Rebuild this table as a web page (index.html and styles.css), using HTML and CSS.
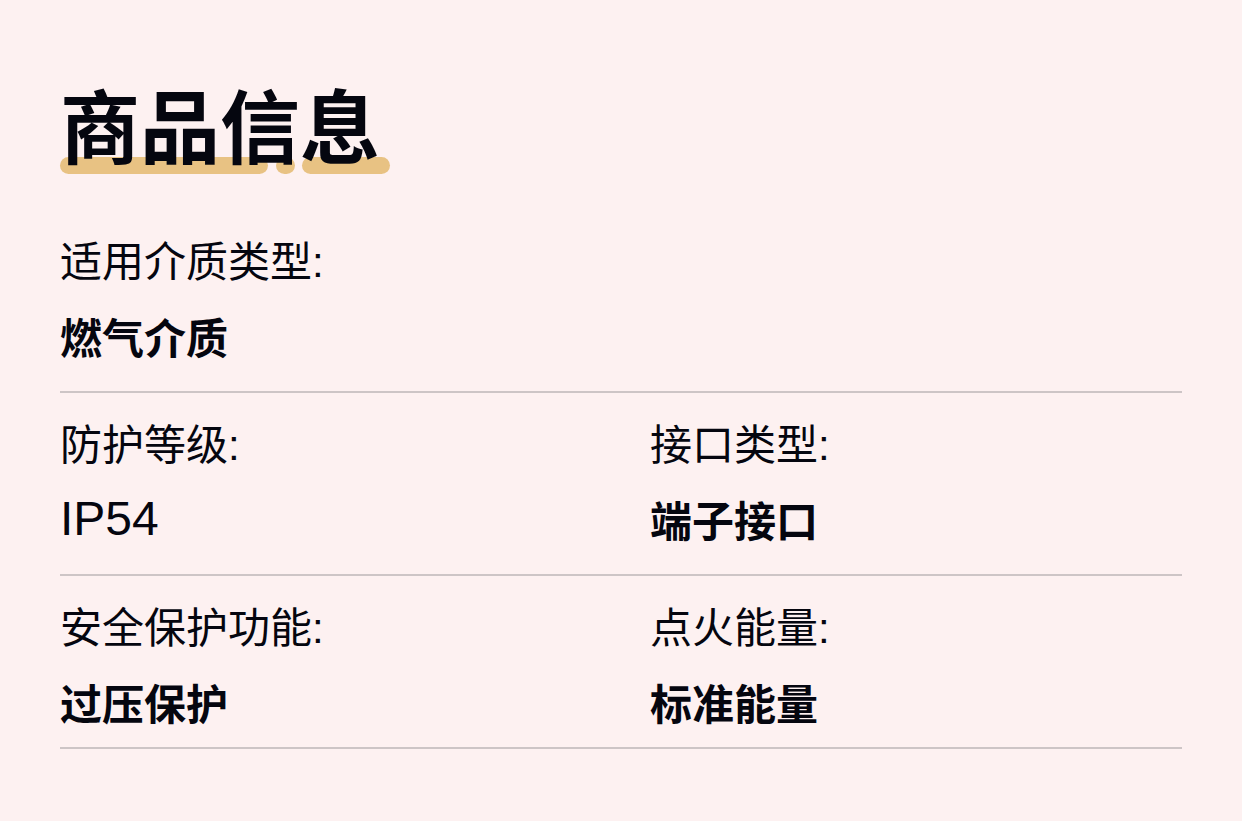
FILE: index.html
```html
<!DOCTYPE html>
<html lang="zh">
<head>
<meta charset="utf-8">
<title>商品信息</title>
<link rel="stylesheet" href="styles.css">
</head>
<body>
<main class="page">
  <h1 class="title">
    <span class="title-text">商品信息<span class="title-underline" aria-hidden="true"><span class="seg seg-a"></span><span class="seg seg-b"></span><span class="seg seg-c"></span></span></span>
  </h1>
  <section class="specs">
    <div class="row row-single">
      <div class="item">
        <div class="label">适用介质类型:</div>
        <div class="value">燃气介质</div>
      </div>
    </div>
    <div class="row">
      <div class="item">
        <div class="label">防护等级:</div>
        <div class="value value-latin">IP54</div>
      </div>
      <div class="item">
        <div class="label">接口类型:</div>
        <div class="value">端子接口</div>
      </div>
    </div>
    <div class="row">
      <div class="item">
        <div class="label">安全保护功能:</div>
        <div class="value">过压保护</div>
      </div>
      <div class="item">
        <div class="label">点火能量:</div>
        <div class="value">标准能量</div>
      </div>
    </div>
  </section>
</main>
</body>
</html>
```
FILE: styles.css
```css
* { box-sizing: border-box; }
html, body {
  margin: 0;
  padding: 0;
  background: #fdf1f1;
}
body {
  font-family: "Liberation Sans", "Noto Sans CJK SC", sans-serif;
  color: #05060f;
}
.page {
  padding: 74px 60px 0;
}
.title {
  margin: 0;
  font-size: 80px;
  font-weight: 700;
  line-height: 96px;
  font-family: "Noto Sans CJK SC", sans-serif;
}
.title-text {
  position: relative;
  display: inline-block;
  isolation: isolate;
}
.title-underline {
  position: absolute;
  left: 0;
  top: 83px;
  height: 17px;
  display: flex;
  z-index: -1;
}
.seg {
  height: 17px;
  background: #e8c283;
  border-radius: 9px;
}
.seg-a { width: 208px; }
.seg-b { width: 19px; margin-left: 8px; }
.seg-c { width: 88px; margin-left: 7px; }
.specs {
  margin-top: 40px;
}
.row {
  display: grid;
  grid-template-columns: 1fr 1fr;
  column-gap: 58px;
  padding: 22px 0 25px;
  border-bottom: 2px solid #cdc5c6;
}
.row:last-child {
  padding-bottom: 15px;
}
.row-single {
  grid-template-columns: 1fr;
}
.item {
  display: flex;
  flex-direction: column;
  gap: 12px;
}
.label {
  font-size: 42px;
  line-height: 61px;
  font-weight: 400;
}
.value {
  font-size: 42px;
  line-height: 61px;
  font-weight: 700;
  font-family: "Noto Sans CJK SC", sans-serif;
}
.value-latin {
  font-family: "Liberation Sans", sans-serif;
  font-weight: 400;
  font-size: 48px;
}
```
